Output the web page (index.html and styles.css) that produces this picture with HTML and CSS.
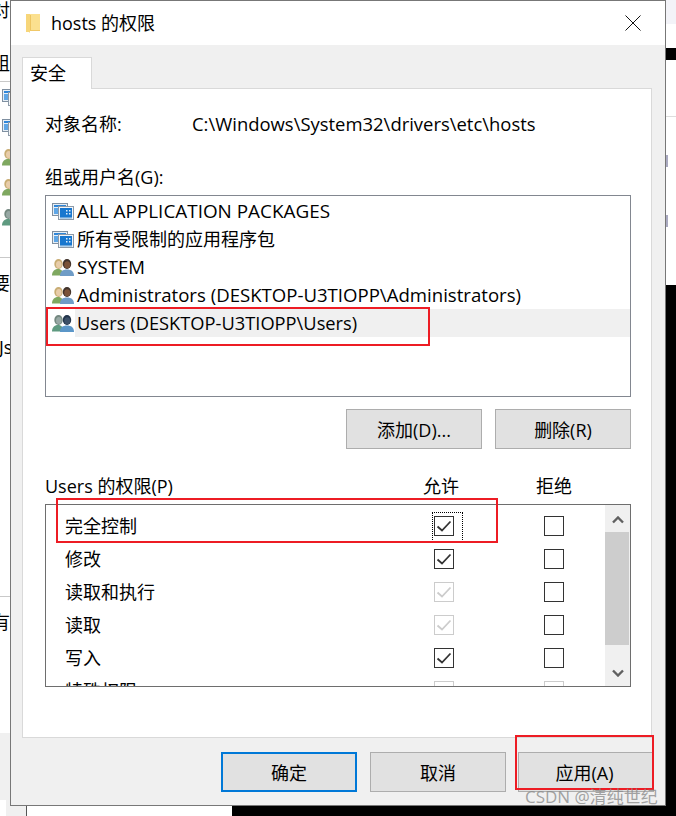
FILE: index.html
```html
<!DOCTYPE html>
<html lang="zh-CN">
<head>
<meta charset="utf-8">
<title>hosts 的权限</title>
<link rel="stylesheet" href="styles.css">
</head>
<body>
<svg class="defs" width="0" height="0" aria-hidden="true">
  <defs>
    <symbol id="net" viewBox="0 0 22 17">
      <rect x="0.5" y="0.5" width="15" height="12" fill="#e6eef5" stroke="#7f8fa0"/>
      <rect x="2" y="2" width="12" height="2" fill="#2f86d8"/>
      <rect x="2" y="5" width="12" height="6" fill="#5ea6e6"/>
      <rect x="6.5" y="3.5" width="15" height="13" fill="#f3f6f9" stroke="#8d9aa8"/>
      <rect x="8" y="5" width="12" height="9" fill="#1877cf"/>
      <path d="M14 7h1.500v1.500H14zM17 7h1.500v1.500H17zM14 10h1.500v1.500H14zM17 10h1.500v1.500H17z" fill="#dcecf9"/>
      <rect x="8" y="14" width="12" height="1.500" fill="#6fa8dc"/>
    </symbol>
    <symbol id="people" viewBox="0 0 22 17">
      <ellipse cx="6.500" cy="5" rx="4.200" ry="5" fill="#c9ad74"/>
      <ellipse cx="6.800" cy="5.400" rx="2.800" ry="3.500" fill="#e8cdaa"/>
      <path d="M0 16.500c0-4 2.500-6.500 6-6.500s5.500 2.500 5.500 6.500z" fill="#7fa860"/>
      <ellipse cx="15" cy="5" rx="4.200" ry="5" fill="#40332b"/>
      <ellipse cx="15.200" cy="5.800" rx="3" ry="3.500" fill="#7a5238"/>
      <path d="M8 17c0-4.500 2.800-6.500 7-6.500s7 2 7 6.500z" fill="#6f9cc6"/>
    </symbol>
    <symbol id="people-sel" viewBox="0 0 22 17">
      <ellipse cx="6.500" cy="5" rx="4.200" ry="5" fill="#748880"/>
      <ellipse cx="6.800" cy="5.400" rx="2.800" ry="3.500" fill="#98a8a4"/>
      <path d="M0 16.500c0-4 2.500-6.500 6-6.500s5.500 2.500 5.500 6.500z" fill="#5f9a80"/>
      <ellipse cx="15" cy="5" rx="4.200" ry="5" fill="#22344a"/>
      <ellipse cx="15.200" cy="5.800" rx="3" ry="3.500" fill="#3c5068"/>
      <path d="M8 17c0-4.500 2.800-6.500 7-6.500s7 2 7 6.500z" fill="#5b96c8"/>
    </symbol>
    <symbol id="tick" viewBox="0 0 20 20">
      <path d="M3.500 10.500l4.500 4 8.500-9" fill="none" stroke="currentColor" stroke-width="1.800"/>
    </symbol>
  </defs>
</svg>

<div class="desk">
  <div class="back">
    <span class="glyph g1">对</span>
    <span class="glyph g2">组</span>
    <span class="glyph g3">要</span>
    <span class="glyph g4">Js</span>
    <span class="glyph g5">有</span>
    <i class="hline h1"></i><i class="hline h2"></i><i class="hline h3"></i>
    <svg class="bicon b1"><use href="#net"/></svg>
    <svg class="bicon b2"><use href="#net"/></svg>
    <svg class="bicon b3"><use href="#people"/></svg>
    <svg class="bicon b4"><use href="#people"/></svg>
    <svg class="bicon b5"><use href="#people-sel"/></svg>
    <i class="grey-left"></i>
    <i class="grey-foot"></i>
    <i class="black-bottom"></i>
    <i class="lav-right"></i>
    <i class="black-r1"></i>
    <i class="hline h4"></i>
    <i class="mark m1"></i><i class="mark m2"></i>
    <i class="black-r2"></i>
  </div>

  <section class="dialog">
    <header class="titlebar">
      <svg class="folder" viewBox="0 0 14 19" width="14" height="19">
        <path d="M0 0h14v17H0z" fill="#fbe08f"/>
        <path d="M0 0h4v19l-1-1H0z" fill="#f7d67a"/>
        <path d="M4 1h1v16H4z" fill="#eec561"/>
        <path d="M4 16h10v1H4z" fill="#f0c868"/>
      </svg>
      <h1 class="title">hosts 的权限</h1>
      <svg class="close" viewBox="0 0 16 16" width="16" height="16">
        <path d="M0.500 0.500l15 15M15.500 0.500l-15 15" stroke="#111" stroke-width="1" fill="none"/>
      </svg>
    </header>

    <div class="body">
      <div class="tab">安全</div>
      <div class="panel">
        <div class="object">
          <span class="object-label">对象名称:</span>
          <span class="object-path">C:\Windows\System32\drivers\etc\hosts</span>
        </div>
        <div class="label groups-label">组或用户名(G):</div>
        <ul class="group-list">
          <li class="group"><svg class="gicon"><use href="#net"/></svg><span class="gname wide">ALL APPLICATION PACKAGES</span></li>
          <li class="group"><svg class="gicon"><use href="#net"/></svg><span class="gname cjk">所有受限制的应用程序包</span></li>
          <li class="group"><svg class="gicon"><use href="#people"/></svg><span class="gname">SYSTEM</span></li>
          <li class="group"><svg class="gicon"><use href="#people"/></svg><span class="gname">Administrators (DESKTOP-U3TIOPP\Administrators)</span></li>
          <li class="group selected"><svg class="gicon"><use href="#people-sel"/></svg><span class="gname narrow">Users (DESKTOP-U3TIOPP\Users)</span></li>
        </ul>
        <div class="list-actions">
          <button class="btn">添加(D)...</button>
          <button class="btn">删除(R)</button>
        </div>
        <div class="perm-head">
          <span class="perm-title">Users 的权限(P)</span>
          <span class="perm-col allow-col">允许</span>
          <span class="perm-col">拒绝</span>
        </div>
        <div class="perm-list">
          <div class="perm-rows">
            <div class="perm"><span class="pname">完全控制</span><span class="cb on focus"><svg><use href="#tick"/></svg></span><span class="cb"></span></div>
            <div class="perm"><span class="pname">修改</span><span class="cb on"><svg><use href="#tick"/></svg></span><span class="cb"></span></div>
            <div class="perm"><span class="pname">读取和执行</span><span class="cb off"><svg><use href="#tick"/></svg></span><span class="cb"></span></div>
            <div class="perm"><span class="pname">读取</span><span class="cb off"><svg><use href="#tick"/></svg></span><span class="cb"></span></div>
            <div class="perm"><span class="pname">写入</span><span class="cb on"><svg><use href="#tick"/></svg></span><span class="cb"></span></div>
            <div class="perm"><span class="pname">特殊权限</span><span class="cb off"></span><span class="cb off"></span></div>
          </div>
          <div class="scrollbar">
            <div class="sb-btn"><svg viewBox="0 0 12 8" width="12" height="8"><path d="M1 6.500l5-5 5 5" fill="none" stroke="#606060" stroke-width="2.400"/></svg></div>
            <div class="sb-thumb"></div>
            <div class="sb-btn sb-down"><svg viewBox="0 0 12 8" width="12" height="8"><path d="M1 1.500l5 5 5-5" fill="none" stroke="#606060" stroke-width="2.400"/></svg></div>
          </div>
        </div>
      </div>
    </div>

    <footer class="footer">
      <button class="btn primary">确定</button>
      <button class="btn">取消</button>
      <button class="btn apply">应用(A)</button>
    </footer>
  </section>

  <i class="redbox r1"></i>
  <i class="redbox r2"></i>
  <i class="redbox r3"></i>
  <div class="watermark">CSDN @清纯世纪</div>
</div>
</body>
</html>
```

FILE: styles.css
```css
* { box-sizing: border-box; }
html, body { margin: 0; padding: 0; }
body {
  width: 676px;
  height: 816px;
  overflow: hidden;
  background: #fff;
  font-family: "Open Sans", "Noto Sans CJK SC", sans-serif;
  font-size: 18px;
  color: #000;
}
.defs { position: absolute; }
.desk { position: relative; width: 676px; height: 816px; overflow: hidden; }

/* windows behind the dialog */
.back { position: absolute; inset: 0; }
.back i { position: absolute; display: block; }
.glyph { position: absolute; left: -8px; font-size: 18px; line-height: 24px; }
.g1 { top: -2px; }
.g2 { top: 51px; }
.g3 { top: 271px; }
.g4 { top: 335px; left: -1px; }
.g5 { top: 610px; }
.hline { height: 1px; background: #c9c9c9; left: 0; width: 12px; }
.h1 { top: 81px; }
.h2 { top: 257px; }
.h3 { top: 596px; }
.back .h4 { top: 116px; left: 664px; width: 12px; background: #ddd; }
.bicon { position: absolute; left: 2px; width: 22px; height: 17px; }
.b1 { top: 89px; }
.b2 { top: 119px; }
.b3 { top: 149px; }
.b4 { top: 179px; }
.b5 { top: 209px; }
.grey-left { left: 0; top: 733px; width: 12px; height: 67px; background: #f0f0f0; }
.grey-foot { left: 6px; top: 800px; width: 21px; height: 16px; background: #f0f0f0; border-right: 1px solid #555; }
.black-bottom { left: 232px; top: 805px; width: 444px; height: 11px; background: #000; }
.lav-right { left: 664px; top: 0; width: 12px; height: 24px; background: #f3f3f8; }
.black-r1 { left: 664px; top: 48px; width: 12px; height: 12px; background: #000; }
.black-r2 { left: 664px; top: 285px; width: 12px; height: 531px; background: #000; }
.mark { left: 666px; width: 2px; height: 12px; background: #a9a9c0; }
.m1 { top: 155px; }
.m2 { top: 215px; }

/* dialog */
.dialog {
  position: absolute;
  left: 10px;
  top: 0;
  width: 656px;
  height: 806px;
  display: flex;
  flex-direction: column;
  background: #f0f0f0;
  border: 1px solid #777;
}
.titlebar {
  flex: 0 0 44px;
  display: flex;
  align-items: center;
  background: #fff;
  padding: 0 24px 0 15px;
}
.folder { flex: none; }
.title {
  flex: 1;
  margin: 0 0 0 11px;
  font-size: 18px;
  font-weight: 400;
  line-height: 44px;
}
.close { flex: none; }

.body { display: flex; flex-direction: column; padding: 12px 13px 0 11px; }
.tab {
  position: relative;
  z-index: 1;
  width: 70px;
  height: 32px;
  margin-bottom: -1px;
  padding-left: 7px;
  background: #fff;
  border: 1px solid #d9d9d9;
  border-bottom: 0;
  line-height: 30px;
}
.panel {
  height: 650px;
  background: #fff;
  border: 1px solid #d9d9d9;
  padding: 23px 20px 0 22px;
}
.object { display: flex; height: 24px; line-height: 24px; }
.object-label { width: 147px; }
.object-path { font-size: 18.45px; }
.label { line-height: 24px; }
.groups-label { margin-top: 29px; }
.group-list {
  list-style: none;
  margin: 6px 0 0;
  padding: 1px 0 0;
  height: 202px;
  border: 1px solid #828790;
  background: #fff;
}
.group { display: flex; align-items: center; height: 28px; }
.gicon { flex: none; width: 22px; height: 17px; margin: 0 1px 0 6px; }
.gname { flex: 1; line-height: 28px; white-space: nowrap; padding-left: 2px; font-size: 18.6px; }
.gname.wide { font-size: 18.9px; }
.gname.narrow { font-size: 18.3px; }
.gname.cjk { font-size: 18px; }
.selected .gname { background: #f0f0f0; }

.list-actions { display: flex; justify-content: flex-end; gap: 13px; margin-top: 12px; }
.btn {
  width: 136px;
  height: 40px;
  padding: 0;
  background: #e1e1e1;
  border: 1px solid #adadad;
  border-radius: 0;
  font: inherit;
  color: #000;
}
.primary { border: 2px solid #0078d7; margin-right: 1px; }
.apply { padding-right: 3px; }

.perm-head { display: flex; height: 24px; line-height: 24px; margin-top: 25px; }
.perm-title { width: 378px; }
.perm-col { width: 36px; }
.allow-col { margin-right: 77px; }

.perm-list {
  display: flex;
  height: 183px;
  margin-top: 6px;
  border: 1px solid #6e6e6e;
  background: #fff;
}
.perm-rows { flex: 1; overflow: hidden; padding: 5px 0 0 19px; }
.perm { display: flex; align-items: center; height: 33px; }
.pname { flex: none; width: 369px; line-height: 33px; }
.cb {
  position: relative;
  flex: none;
  width: 20px;
  height: 20px;
  margin: 0 90px 2px 0;
  border: 1px solid #333;
  color: #333;
}
.cb + .cb { margin-right: 0; }
.cb svg { position: absolute; left: -1px; top: -1px; width: 20px; height: 20px; }
.cb.off { border-color: #ccc; color: #ccc; }
.cb.focus::after {
  content: "";
  position: absolute;
  left: -3px;
  top: -5px;
  width: 29px;
  height: 28px;
  border: 1px dotted #000;
}
.scrollbar {
  flex: 0 0 25px;
  display: flex;
  flex-direction: column;
  background: #f0f0f0;
}
.sb-btn { flex: 0 0 27px; display: flex; align-items: center; justify-content: center; padding-top: 2px; }
.sb-down { flex: 1; align-items: flex-end; padding: 0 0 9px; }
.sb-thumb { flex: 0 0 113px; background: #cdcdcd; margin-right: 1px; }

.footer { flex: 1; display: flex; justify-content: flex-end; gap: 12px; padding: 14px 11px 0 0; }

/* annotations */
.redbox { position: absolute; display: block; border: 2px solid #ed1c24; }
.r1 { left: 46px; top: 307px; width: 384px; height: 39px; }
.r2 { left: 56px; top: 498px; width: 442px; height: 45px; }
.r3 { left: 515px; top: 735px; width: 139px; height: 55px; }
.watermark {
  position: absolute;
  left: 525px;
  top: 785px;
  font-size: 17px;
  line-height: 24px;
  color: rgba(140, 140, 140, 0.8);
  white-space: nowrap;
}
```
